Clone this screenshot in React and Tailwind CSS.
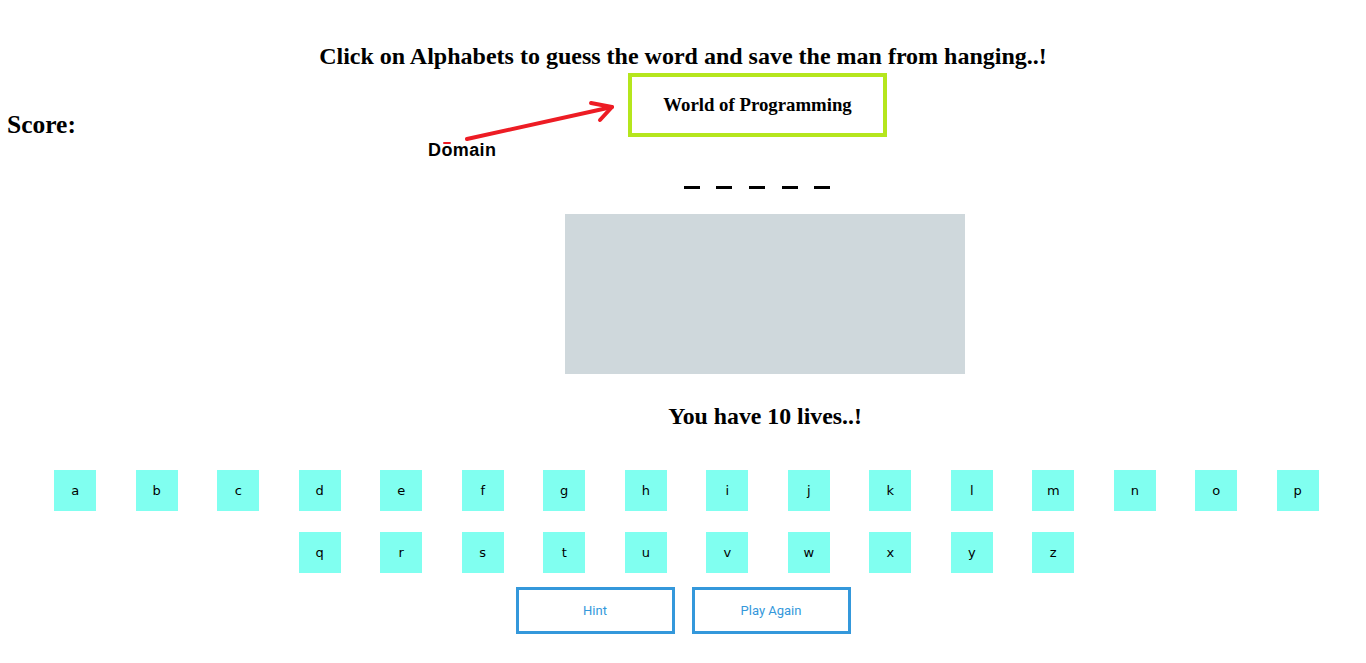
import React from 'react';

const letters = 'abcdefghijklmnopqrstuvwxyz'.split('');

export default function App() {
  const word = ['', '', '', '', ''];

  return (
    <div className="relative w-[1366px] h-[663px] bg-white overflow-hidden font-['Liberation_Serif',serif] text-black">
      {/* heading */}
      <h2 className="pt-[42px] text-center text-[24px] leading-[28px] font-bold">
        Click on Alphabets to guess the word and save the man from hanging..!
      </h2>

      {/* score + domain */}
      <div className="flex mt-[3px] h-[64px]">
        <div className="w-[628px] shrink-0 pl-[7px] pt-[38px]">
          <h2 className="text-[25.5px] leading-[28px] font-bold">Score:</h2>
        </div>
        <div className="w-[259px] h-[64px] border-4 border-[#b5e61d] flex items-center justify-center">
          <p className="text-[18.8px] font-bold">World of Programming</p>
        </div>
      </div>

      {/* blanks */}
      <div className="flex justify-center pl-[148px] mt-[49px] gap-[16.7px]">
        {word.map((_, i) => (
          <span key={i} className="w-[16px] h-[3px] bg-black" />
        ))}
      </div>

      {/* hangman canvas */}
      <div className="flex justify-center pl-[164px] mt-[25px]">
        <div className="w-[400px] h-[160px] bg-[#cfd8dc]" />
      </div>

      <h3 className="text-center pl-[164px] mt-[28px] text-[23.8px] leading-[28px] font-bold">
        You have 10 lives..!
      </h3>

      {/* alphabet */}
      <ul className="mx-auto mt-[40px] pl-[7px] max-w-[1290px] flex flex-wrap justify-center gap-x-[39.5px] gap-y-[21px]">
        {letters.map((l) => (
          <li key={l}>
            <button className="w-[42px] h-[41px] bg-[#80fff0] font-['Comic_Sans_MS','DejaVu_Sans',sans-serif] text-[13px] text-black">
              {l}
            </button>
          </li>
        ))}
      </ul>

      <div className="flex justify-center gap-[17px] mt-[14px]">
        <button className="w-[159px] h-[47px] border-[3px] border-[#3498db] text-[#3498db] text-[13px] font-['Roboto',sans-serif]">
          Hint
        </button>
        <button className="w-[159px] h-[47px] border-[3px] border-[#3498db] text-[#3498db] text-[13px] font-['Roboto',sans-serif]">
          Play Again
        </button>
      </div>

      {/* annotation drawn over the screenshot */}
      <svg className="absolute left-0 top-0 pointer-events-none" width="1366" height="663">
        <g stroke="#ed1c24" strokeWidth="4" fill="none" strokeLinecap="round" strokeLinejoin="round">
          <line x1="467" y1="139" x2="612" y2="107" />
          <polyline points="591,103 612,107 600,120" />
          <line x1="444" y1="143" x2="450" y2="143" strokeWidth="2" />
        </g>
      </svg>
      <span className="absolute left-[428px] top-[140px] text-[18px] leading-[20px] tracking-[0.4px] font-bold font-['Liberation_Sans',sans-serif]">
        Domain
      </span>
    </div>
  );
}
